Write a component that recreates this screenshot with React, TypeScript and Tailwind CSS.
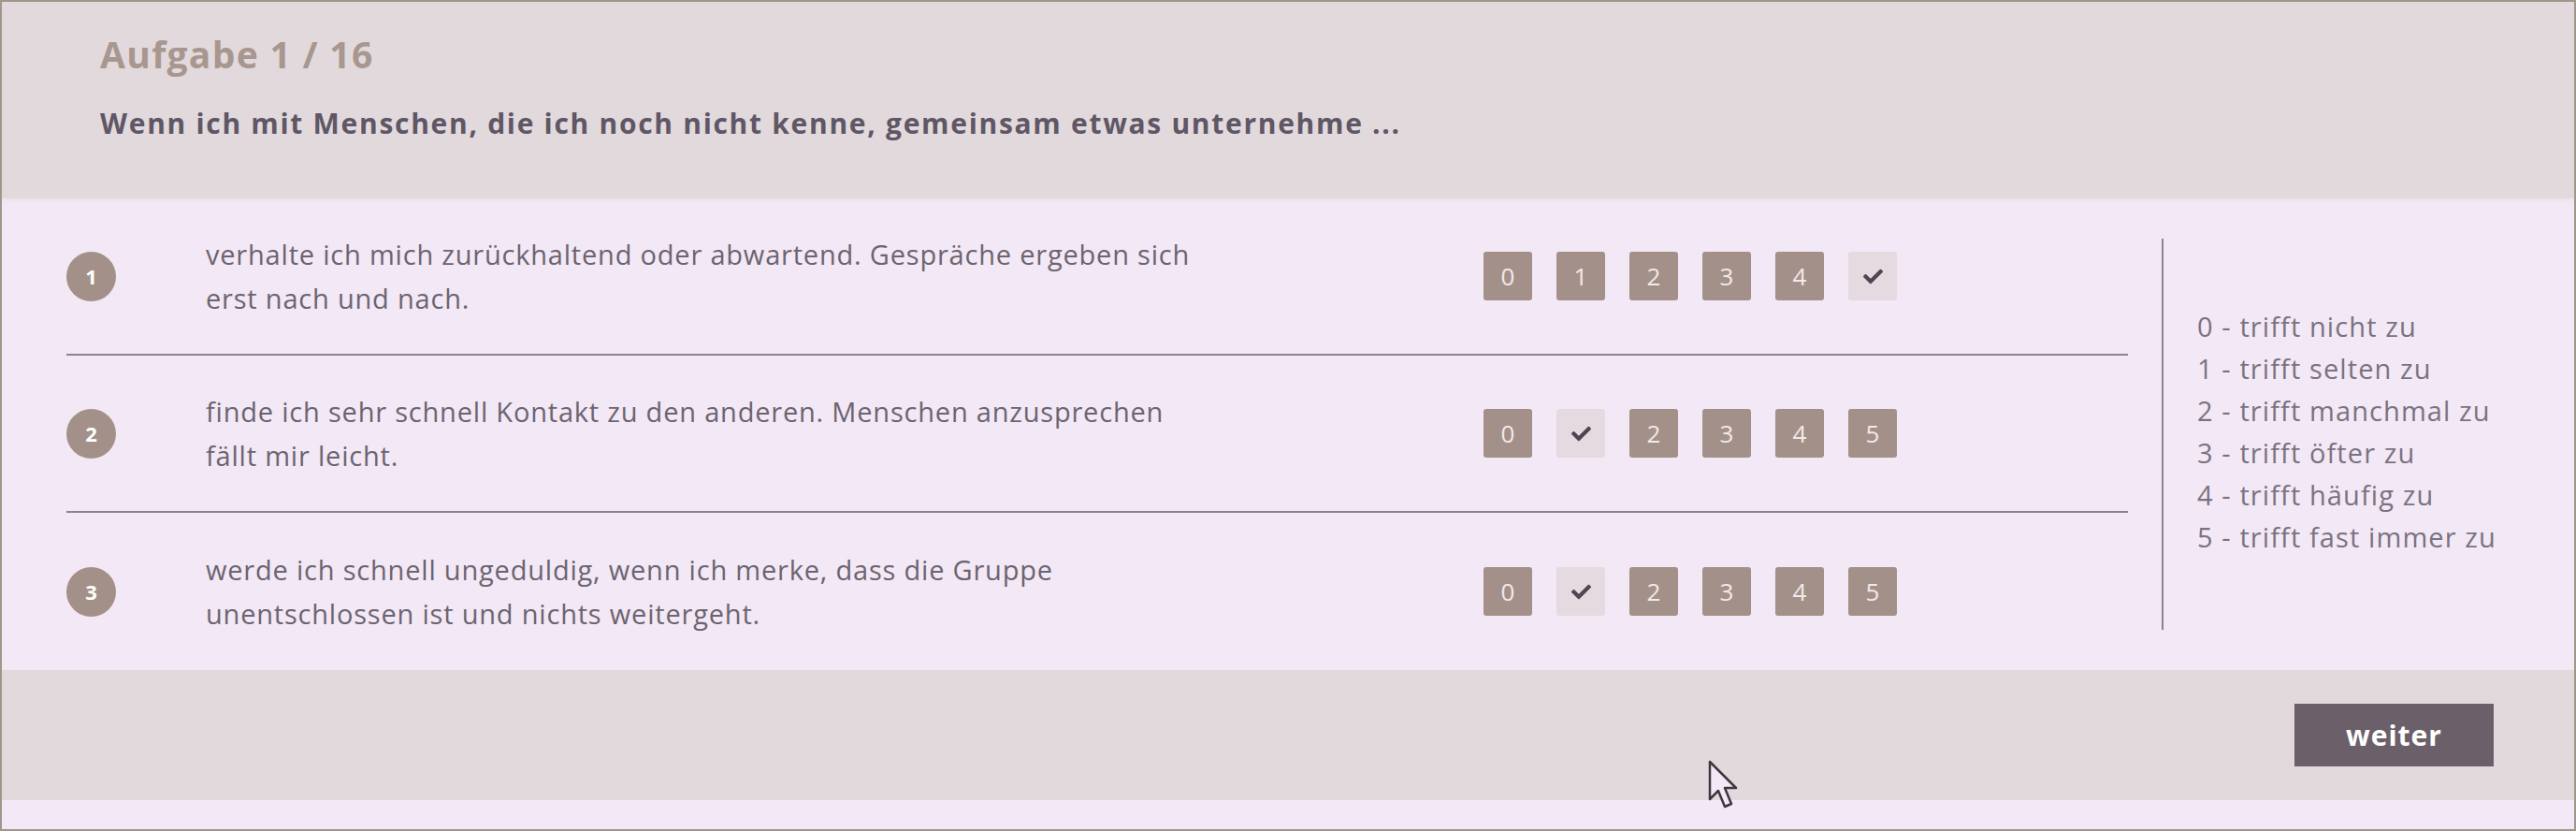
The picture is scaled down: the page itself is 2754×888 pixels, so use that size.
import { FaCheck } from "react-icons/fa";

const items = [
  {
    n: 1,
    lines: ["verhalte ich mich zurückhaltend oder abwartend. Gespräche ergeben sich", "erst nach und nach."],
    picked: 5,
  },
  {
    n: 2,
    lines: ["finde ich sehr schnell Kontakt zu den anderen. Menschen anzusprechen", "fällt mir leicht."],
    picked: 1,
  },
  {
    n: 3,
    lines: ["werde ich schnell ungeduldig, wenn ich merke, dass die Gruppe", "unentschlossen ist und nichts weitergeht."],
    picked: 1,
  },
];

const legend = [
  "0 - trifft nicht zu",
  "1 - trifft selten zu",
  "2 - trifft manchmal zu",
  "3 - trifft öfter zu",
  "4 - trifft häufig zu",
  "5 - trifft fast immer zu",
];

function Scale({ picked }: { picked: number }) {
  return (
    <div className="flex gap-[26px]">
      {[0, 1, 2, 3, 4, 5].map((v) =>
        v === picked ? (
          <div key={v} className="w-[52px] h-[52px] rounded-[3px] bg-[#e4dae0] flex items-center justify-center text-[#4f4654]">
            <FaCheck className="w-[21px] h-[21px]" />
          </div>
        ) : (
          <div key={v} className="w-[52px] h-[52px] rounded-[3px] bg-[#a39189] flex items-center justify-center text-[26px] text-[#f3e8ea]">
            {v}
          </div>
        )
      )}
    </div>
  );
}

export default function App() {
  return (
    <div className="relative w-[2754px] h-[888px] border-2 border-[#a0968a] bg-[#f3e8f5] flex flex-col font-['Open_Sans',sans-serif] overflow-hidden">
      {/* Header */}
      <div className="h-[210px] shrink-0 bg-[#e2d9dd] pl-[105px] pt-[32px] shadow-[0_2px_4px_rgba(0,0,0,0.04)]">
        <h1 className="text-[39px] leading-[48px] tracking-[1.3px] font-bold text-[#a8978f]">Aufgabe 1 / 16</h1>
        <p className="mt-[30px] text-[30px] leading-[40px] tracking-[1.7px] font-bold text-[#5f5765]">
          Wenn ich mit Menschen, die ich noch nicht kenne, gemeinsam etwas unternehme ...
        </p>
      </div>

      {/* Statements + legend */}
      <div className="h-[504px] shrink-0 flex">
        <div className="w-[2273px] pl-[69px] flex flex-col">
          {items.map((it, i) => (
            <div
              key={it.n}
              className={`h-[168px] flex items-center ${i < 2 ? "border-b-2 border-[#8c8290]" : ""}`}
            >
              <div className="w-[53px] h-[53px] rounded-full bg-[#a39189] flex items-center justify-center text-[22px] font-bold text-white">
                {it.n}
              </div>
              <div className="ml-[96px] w-[1366px] text-[29px] leading-[47px] tracking-[0.8px] text-[#6c6470]">
                {it.lines.map((l) => (
                  <div key={l}>{l}</div>
                ))}
              </div>
              <Scale picked={it.picked} />
            </div>
          ))}
        </div>
        <div className="ml-[36px] my-[43px] border-l-2 border-[#8c8290] pl-[36px] pb-[6px] flex flex-col justify-center text-[29px] leading-[45px] tracking-[1.1px] text-[#7b7281]">
          {legend.map((l) => (
            <div key={l}>{l}</div>
          ))}
        </div>
      </div>

      {/* Footer */}
      <div className="h-[139px] shrink-0 bg-[#e2d9dd] flex items-center justify-end pr-[86px]">
        <button className="w-[213px] h-[67px] bg-[#6b6069] text-white text-[30px] tracking-[1px] font-bold">weiter</button>
      </div>

      {/* mouse pointer */}
      <svg className="absolute left-[1824px] top-[810px]" width="36" height="56" viewBox="0 0 36 56">
        <path d="M2 2 L2 42 L11 33 L18 50 L25 47 L18 30 L30 30 Z" fill="#f3e8f5" stroke="#3d3840" strokeWidth="2.5" strokeLinejoin="round" />
      </svg>
    </div>
  );
}
